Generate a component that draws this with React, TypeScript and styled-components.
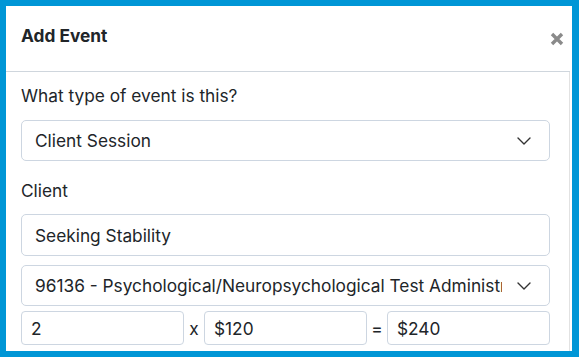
import styled, { createGlobalStyle } from "styled-components";

const GlobalStyle = createGlobalStyle`
  html, body {
    margin: 0;
    padding: 0;
    background: #0096d6;
  }
  * {
    box-sizing: border-box;
  }
  body {
    font-family: Inter, "Noto Sans", sans-serif;
    font-size: 17.3px;
    color: #212529;
  }
`;

const Frame = styled.div`
  height: 357px;
  padding: 6px 7px 6px 6px;
`;

const Dialog = styled.div`
  height: 100%;
  background: #fff;
  padding-right: 2px;
  display: flex;
  flex-direction: column;
  overflow: hidden;
`;

const Header = styled.div`
  height: 66px;
  flex-shrink: 0;
  display: flex;
  align-items: center;
  justify-content: space-between;
  padding: 0 6px 0 15px;
  border-bottom: 1px solid #cfd6dd;
`;

const Title = styled.h5`
  margin: 0 0 6px;
  font-size: 17.3px;
  line-height: 24px;
  font-weight: 700;
`;

const Close = styled.button`
  border: 0;
  background: none;
  padding: 0;
  width: 14px;
  height: 14px;
  display: flex;
  color: #8a8a8a;
  cursor: pointer;
`;

const Body = styled.div`
  flex: 1;
  border-right: 1px solid #e2e2e2;
  padding: 12px 19px 0 15px;
  display: flex;
  flex-direction: column;
`;

const Label = styled.label<{ $gap: number; $mt?: number }>`
  line-height: 24px;
  margin-top: ${({ $mt }) => $mt ?? 0}px;
  margin-bottom: ${({ $gap }) => $gap}px;
`;

const Field = styled.div<{ $h: number; $mt?: number; $select?: boolean }>`
  position: relative;
  height: ${({ $h }) => $h}px;
  margin-top: ${({ $mt }) => $mt ?? 0}px;
  border: 1px solid #cdd6e1;
  border-radius: 5px;
  display: flex;
  align-items: center;
  padding: 0 ${({ $select }) => ($select ? 47 : 13)}px 0 13px;
  white-space: nowrap;
`;

const Value = styled.span`
  overflow: hidden;
  white-space: nowrap;
`;

const Chevron = styled.svg`
  position: absolute;
  right: 18px;
  top: 50%;
  margin-top: -4px;
`;

const Row = styled.div`
  margin-top: 5px;
  display: flex;
  align-items: center;
`;

const Small = styled.div`
  flex: 1;
  height: 34px;
  border: 1px solid #cdd6e1;
  border-radius: 4px;
  display: flex;
  align-items: center;
  padding: 0 9px;
`;

const Op = styled.span`
  width: 20px;
  text-align: center;
`;

const Select = ({ value, h, mt }: { value: string; h: number; mt?: number }) => (
  <Field $h={h} $mt={mt} $select>
    <Value>{value}</Value>
    <Chevron width="14" height="8" viewBox="0 0 14 8" fill="none">
      <path d="M1 1l6 6 6-6" stroke="#333" strokeWidth="1.4" strokeLinecap="round" strokeLinejoin="round" />
    </Chevron>
  </Field>
);

export default function App() {
  return (
    <>
      <GlobalStyle />
      <Frame>
        <Dialog>
          <Header>
            <Title>Add Event</Title>
            <Close aria-label="Close">
              <svg width="14" height="14" viewBox="0 0 14 14">
                <path d="M2 2l10 10M12 2L2 12" stroke="currentColor" strokeWidth="3.4" />
              </svg>
            </Close>
          </Header>
          <Body>
            <Label $gap={12}>What type of event is this?</Label>
            <Select value="Client Session" h={41} />
            <Label $gap={11} $mt={18}>
              Client
            </Label>
            <Field $h={42}>
              <Value>Seeking Stability</Value>
            </Field>
            <Select value="96136 - Psychological/Neuropsychological Test Administration" h={41} mt={9} />
            <Row>
              <Small>2</Small>
              <Op>x</Op>
              <Small>$120</Small>
              <Op>=</Op>
              <Small>$240</Small>
            </Row>
          </Body>
        </Dialog>
      </Frame>
    </>
  );
}
